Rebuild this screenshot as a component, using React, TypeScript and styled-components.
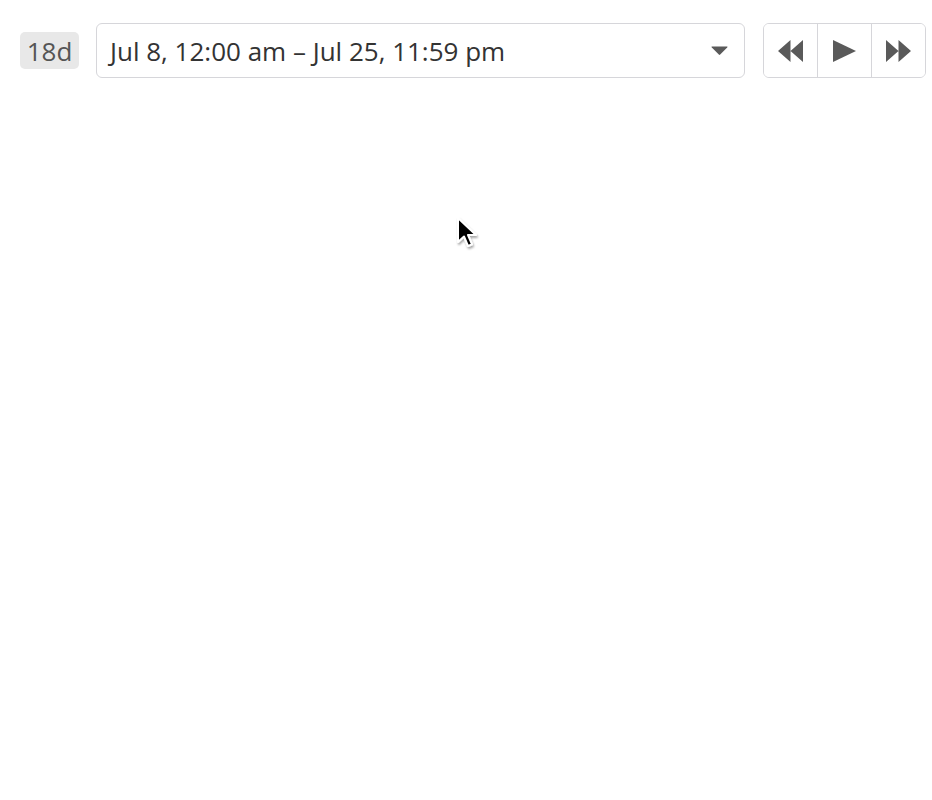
import React from 'react';
import styled, { createGlobalStyle } from 'styled-components';

const GlobalStyle = createGlobalStyle`
  html, body {
    margin: 0;
    padding: 0;
    background: #ffffff;
    font-family: 'Open Sans', 'Noto Sans', sans-serif;
  }
`;

const Page = styled.div`
  position: relative;
  width: 932px;
  height: 800px;
  background: #ffffff;
`;

const Toolbar = styled.div`
  display: flex;
  align-items: center;
  padding: 23px 0 0 20px;
`;

const Badge = styled.span`
  display: flex;
  align-items: center;
  justify-content: center;
  width: 59px;
  height: 37px;
  border-radius: 5px;
  background: #e8e8e8;
  color: #555555;
  font-size: 26px;
  margin-right: 17px;
`;

const RangeSelect = styled.div`
  display: flex;
  align-items: center;
  justify-content: space-between;
  box-sizing: border-box;
  width: 649px;
  height: 55px;
  padding: 0 16px 0 13px;
  border: 1px solid #d6d6da;
  border-radius: 6px;
  color: #333333;
  font-size: 26px;
  margin-right: 18px;
`;

const ButtonGroup = styled.div`
  display: flex;
  box-sizing: border-box;
  height: 55px;
  border: 1px solid #d6d6da;
  border-radius: 6px;
  overflow: hidden;
`;

const NavButton = styled.button<{ $last?: boolean }>`
  display: flex;
  align-items: center;
  justify-content: center;
  width: ${(p) => (p.$last ? '53px' : '54px')};
  height: 100%;
  padding: 0;
  border: none;
  border-right: ${(p) => (p.$last ? 'none' : '1px solid #d6d6da')};
  background: #ffffff;
  color: #5a5a5a;
`;

const Cursor = styled.svg`
  position: absolute;
  left: 456px;
  top: 216px;
`;

const Caret = () => (
  <svg width="17" height="10" viewBox="0 0 17 10">
    <path d="M1 0.5 L16 0.5 Q17 0.5 16.2 1.4 L9.2 8.6 Q8.5 9.3 7.8 8.6 L0.8 1.4 Q0 0.5 1 0.5 Z" fill="#5a5a5a" />
  </svg>
);

const Rewind = () => (
  <svg width="25" height="22" viewBox="0 0 25 22">
    <path d="M12.5 0 L12.5 22 L0 11 Z M25 0 L25 22 L12.5 11 Z" fill="currentColor" />
  </svg>
);

const Play = () => (
  <svg width="23" height="22" viewBox="0 0 23 22">
    <path d="M0 0 L23 11 L0 22 Z" fill="currentColor" />
  </svg>
);

const Forward = () => (
  <svg width="25" height="22" viewBox="0 0 25 22">
    <path d="M0 0 L12.5 11 L0 22 Z M12.5 0 L25 11 L12.5 22 Z" fill="currentColor" />
  </svg>
);

export default function App() {
  return (
    <Page>
      <GlobalStyle />
      <Toolbar>
        <Badge>18d</Badge>
        <RangeSelect>
          <span>Jul 8, 12:00 am – Jul 25, 11:59 pm</span>
          <Caret />
        </RangeSelect>
        <ButtonGroup>
          <NavButton aria-label="Previous">
            <Rewind />
          </NavButton>
          <NavButton aria-label="Play">
            <Play />
          </NavButton>
          <NavButton $last aria-label="Next">
            <Forward />
          </NavButton>
        </ButtonGroup>
      </Toolbar>
      <Cursor width="24" height="36" viewBox="0 0 24 36">
        <defs>
          <filter id="sh" x="-30%" y="-30%" width="160%" height="160%">
            <feDropShadow dx="1" dy="2" stdDeviation="1.2" floodOpacity="0.35" />
          </filter>
        </defs>
        <path
          d="M2 2 L2 26 L8 20.5 L12 30 L16 28.3 L12 19 L20 19 Z"
          fill="#000000"
          stroke="#ffffff"
          strokeWidth="2"
          strokeLinejoin="round"
          filter="url(#sh)"
        />
      </Cursor>
    </Page>
  );
}
